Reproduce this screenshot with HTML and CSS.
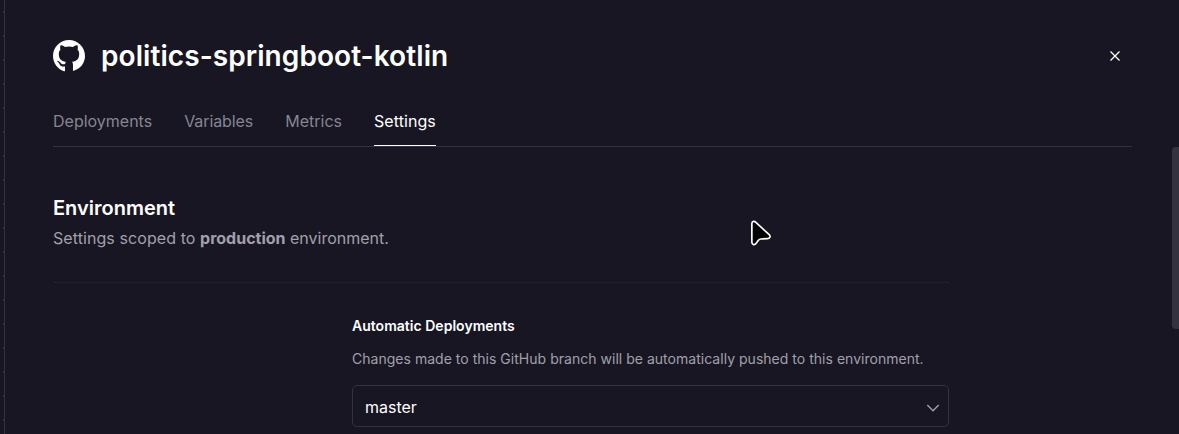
FILE: index.html
```html
<!DOCTYPE html>
<html lang="en">
<head>
<meta charset="utf-8">
<title>politics-springboot-kotlin</title>
<link rel="stylesheet" href="styles.css">
</head>
<body>
<div class="canvas"></div>
<main class="panel">
  <header class="header">
    <svg class="logo" viewBox="0 0 16 16" aria-hidden="true"><path fill="currentColor" d="M8 0C3.58 0 0 3.58 0 8c0 3.54 2.29 6.530 5.470 7.590.2.035.4.010.530-.08V13.200c-2.230.480-2.700-1.070-2.700-1.070-.360-.930-.890-1.170-.890-1.170-.730-.500.060-.490.060-.490.800.060 1.230.830 1.230.830.710 1.220 1.870.870 2.330.660.070-.520.280-.870.510-1.070-1.780-.200-3.640-.890-3.640-3.950 0-.870.310-1.590.820-2.150-.080-.200-.360-1.020.080-2.120 0 0 .670-.210 2.200.820.640-.180 1.320-.270 2-.270s1.360.090 2 .270c1.530-1.040 2.200-.820 2.200-.820.440 1.100.160 1.920.080 2.120.510.560.820 1.270.820 2.150 0 3.070-1.870 3.750-3.650 3.950.290.250.540.730.540 1.480v3.150C13.710 14.530 16 11.540 16 8c0-4.420-3.580-8-8-8z"/></svg>
    <h1 class="title">politics-springboot-kotlin</h1>
    <button class="close" aria-label="Close"><svg width="10" height="10" viewBox="0 0 10 10"><path d="M.5.5l9 9M9.500.5l-9 9" fill="none" stroke="currentColor" stroke-width="1.3"/></svg></button>
  </header>
  <nav class="tabs">
    <a class="tab">Deployments</a>
    <a class="tab tab-tight">Variables</a>
    <a class="tab">Metrics</a>
    <a class="tab tab-active">Settings</a>
  </nav>
  <section class="environment">
    <h2 class="section-title">Environment</h2>
    <p class="section-text"><span class="lead">Settings scoped to </span><strong>production</strong> environment.</p>
    <div class="setting">
      <h3 class="setting-title">Automatic Deployments</h3>
      <p class="setting-text">Changes made to this GitHub branch will be automatically pushed to this environment.</p>
      <div class="select">
        <span>master</span>
        <svg width="14" height="8" viewBox="0 0 14 8"><path d="M1.300 1l5.700 5.700L12.700 1" fill="none" stroke="currentColor" stroke-width="1.400"/></svg>
      </div>
    </div>
  </section>
</main>
<div class="scrollbar"></div>
<svg class="cursor" width="25" height="29" viewBox="0 0 24 28"><path d="M2.700 4.500v18c0 2.500 2.700 3 4 1.200l2.100-2.900c.7-1 1.500-1.400 2.700-1.500l6.500-.4c2.500-.2 3-2.500 1.200-4L6.300 3C4.700 1.600 2.700 2.400 2.700 4.500z" fill="#000" stroke="#fff" stroke-width="1.600"/></svg>
</body>
</html>
```
FILE: styles.css
```css
* { box-sizing: border-box; }
body {
  margin: 0;
  height: 434px;
  display: flex;
  overflow: hidden;
  background: #181622;
  color: #fff;
  font-family: Inter, sans-serif;
  font-size: 16px;
}
h1, h2, h3, p { margin: 0; }
.canvas {
  width: 4px;
  flex: none;
  background: repeating-linear-gradient(transparent 0 11px, #33323e 11px 13px, transparent 13px 24px) 3px 0 / 1px 100% no-repeat;
}
.panel {
  flex: 1;
  border-left: 1px solid #33323e;
  padding: 36px 47px 0 48px;
}
.header { display: flex; align-items: center; height: 40px; }
.logo { width: 32px; height: 32px; margin-right: 16px; }
.title { font-size: 28px; line-height: 40px; font-weight: 600; letter-spacing: .07px; }
.close {
  display: flex;
  margin: 0 12px 0 auto;
  padding: 0;
  border: 0;
  background: none;
  color: #fff;
}
.tabs {
  display: flex;
  gap: 32px;
  height: 51px;
  margin-top: 20px;
  border-bottom: 1px solid #33323e;
}
.tab { height: 50px; line-height: 50px; color: #868593; }
.tab-tight { letter-spacing: -.08px; }
.tab-active { color: #fff; border-bottom: 1px solid #fff; letter-spacing: .08px; }
.environment { width: 896px; padding-top: 47px; }
.section-title { font-size: 20px; line-height: 28px; font-weight: 600; }
.section-text { margin-top: 4px; line-height: 24px; color: #a1a0ab; }
.section-text .lead { letter-spacing: .08px; }
.section-text strong { font-weight: 700; }
.setting {
  margin-top: 32px;
  padding: 33px 0 0 299px;
  border-top: 1px solid #211f2d;
}
.setting-title { font-size: 14px; line-height: 20px; font-weight: 600; letter-spacing: .02px; }
.setting-text { margin-top: 13px; font-size: 14px; line-height: 20px; color: #a1a0ab; white-space: nowrap; letter-spacing: .024px; }
.select {
  display: flex;
  align-items: center;
  justify-content: space-between;
  height: 42px;
  margin-top: 16px;
  padding: 2px 8px 0 12px;
  border: 1px solid #33323e;
  border-radius: 5px;
}
.select svg { color: #a1a0ab; margin-top: 2px; }
.scrollbar {
  position: absolute;
  right: 0;
  top: 147px;
  width: 7px;
  height: 182px;
  border-radius: 4px 0 0 4px;
  background: #33323e;
}
.cursor { position: absolute; left: 749px; top: 219px; }
```
